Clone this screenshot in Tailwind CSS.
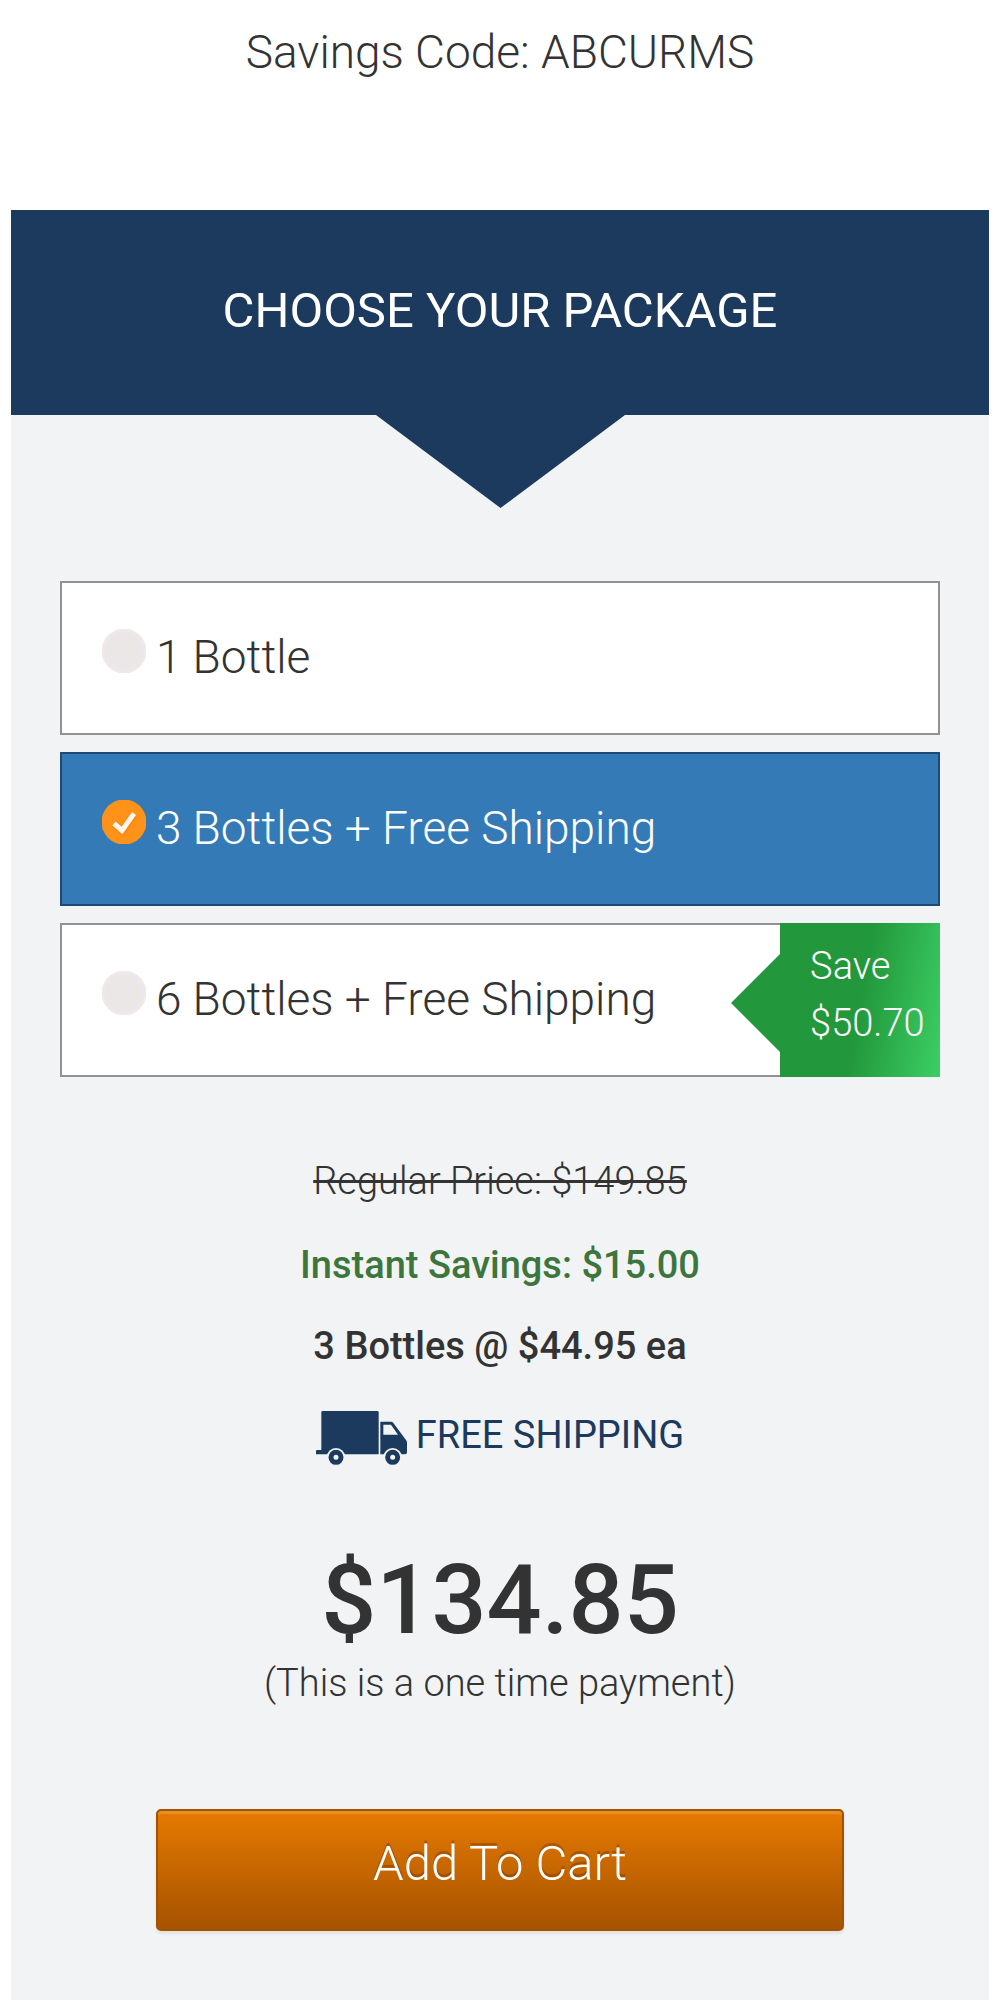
<!DOCTYPE html>
<html lang="en">
<head>
<meta charset="utf-8">
<meta name="viewport" content="width=device-width, initial-scale=1">
<title>Choose Your Package</title>
<script src="https://cdn.jsdelivr.net/npm/@tailwindcss/browser@4"></script>
</head>
<body class="bg-white font-['Roboto',sans-serif] font-light text-[#333]">
<main class="px-[11px]">
  <p class="pt-5 pb-[126px] text-center text-[46px] leading-[64px]">Savings Code: ABCURMS</p>

  <form class="bg-[#f1f3f5] pb-24" onsubmit="return false">
    <h1 class="bg-[#1b3a5d] pt-[69px] pb-[72px] text-center text-[49px] leading-[64px] font-normal text-white">CHOOSE YOUR PACKAGE</h1>
    <svg class="mx-auto h-[93px] w-[249px] text-[#1b3a5d]" viewBox="0 0 249 93" aria-hidden="true"><path d="M0 0H249L124.500 93Z" fill="currentColor"/></svg>

    <fieldset class="mt-[73px] flex flex-col gap-[17px] px-[5%] text-[46px] leading-[64px]">
      <label class="flex min-h-[154px] items-center gap-[10px] border-2 border-[#929292] bg-white pl-10 has-[:checked]:border-[#1f4a75] has-[:checked]:bg-[#337ab7] has-[:checked]:text-white">
        <span class="mb-[14px] grid size-11 shrink-0">
          <input type="radio" name="package" value="1" class="peer col-start-1 row-start-1 size-11 appearance-none rounded-full">
          <svg class="pointer-events-none col-start-1 row-start-1 size-11 peer-checked:hidden" viewBox="0 0 44 44" aria-hidden="true"><circle cx="22" cy="22" r="22.500" fill="#f7e9df"/><circle cx="22" cy="22" r="21" fill="#e9e8ee"/><circle cx="22" cy="22" r="18" fill="#ebe7e7"/></svg>
          <svg class="pointer-events-none col-start-1 row-start-1 hidden size-11 peer-checked:block" viewBox="0 0 44 44" aria-hidden="true"><circle cx="22" cy="22" r="22.500" fill="#ff931a"/><path d="M12.500 24L20.500 31L32 14.500" fill="none" stroke="#ff7a00" stroke-width="8" opacity=".5"/><path d="M12 23.500L20 30.500L32 13.500" fill="none" stroke="#fff6ee" stroke-width="5"/></svg>
        </span>
        <span class="mb-0.5">1 Bottle</span>
      </label>
      <label class="flex min-h-[154px] items-center gap-[10px] border-2 border-[#929292] bg-white pl-10 has-[:checked]:border-[#1f4a75] has-[:checked]:bg-[#337ab7] has-[:checked]:text-white">
        <span class="mb-[14px] grid size-11 shrink-0">
          <input type="radio" name="package" value="3" checked class="peer col-start-1 row-start-1 size-11 appearance-none rounded-full">
          <svg class="pointer-events-none col-start-1 row-start-1 size-11 peer-checked:hidden" viewBox="0 0 44 44" aria-hidden="true"><circle cx="22" cy="22" r="22.500" fill="#f7e9df"/><circle cx="22" cy="22" r="21" fill="#e9e8ee"/><circle cx="22" cy="22" r="18" fill="#ebe7e7"/></svg>
          <svg class="pointer-events-none col-start-1 row-start-1 hidden size-11 peer-checked:block" viewBox="0 0 44 44" aria-hidden="true"><circle cx="22" cy="22" r="22.500" fill="#ff931a"/><path d="M12.500 24L20.500 31L32 14.500" fill="none" stroke="#ff7a00" stroke-width="8" opacity=".5"/><path d="M12 23.500L20 30.500L32 13.500" fill="none" stroke="#fff6ee" stroke-width="5"/></svg>
        </span>
        <span class="mb-0.5">3 Bottles + Free Shipping</span>
      </label>
      <label class="flex min-h-[154px] items-center gap-[10px] border-2 border-[#929292] bg-white pl-10 has-[:checked]:border-[#1f4a75] has-[:checked]:bg-[#337ab7] has-[:checked]:text-white">
        <span class="mb-[14px] grid size-11 shrink-0">
          <input type="radio" name="package" value="6" class="peer col-start-1 row-start-1 size-11 appearance-none rounded-full">
          <svg class="pointer-events-none col-start-1 row-start-1 size-11 peer-checked:hidden" viewBox="0 0 44 44" aria-hidden="true"><circle cx="22" cy="22" r="22.500" fill="#f7e9df"/><circle cx="22" cy="22" r="21" fill="#e9e8ee"/><circle cx="22" cy="22" r="18" fill="#ebe7e7"/></svg>
          <svg class="pointer-events-none col-start-1 row-start-1 hidden size-11 peer-checked:block" viewBox="0 0 44 44" aria-hidden="true"><circle cx="22" cy="22" r="22.500" fill="#ff931a"/><path d="M12.500 24L20.500 31L32 14.500" fill="none" stroke="#ff7a00" stroke-width="8" opacity=".5"/><path d="M12 23.500L20 30.500L32 13.500" fill="none" stroke="#fff6ee" stroke-width="5"/></svg>
        </span>
        <span class="mb-0.5">6 Bottles + Free Shipping</span>
        <span class="relative -my-0.5 -mr-0.5 ml-auto flex w-40 shrink-0 flex-col self-stretch bg-linear-[100deg,#22973b_50%,#3acb62_97%] pt-[15px] pl-[30px] text-[38px] leading-[57px] text-white">
          <svg class="absolute top-[31px] right-full h-[98px] w-[49px]" viewBox="0 0 49 98" aria-hidden="true"><path d="M49 0V98L0 49Z" fill="#22973b"/></svg>
          <span>Save</span>
          <span>$50.70</span>
        </span>
      </label>
    </fieldset>

    <section class="mt-[76px] flex flex-col items-center text-center text-[38px] leading-[56px]">
      <p><s>Regular Price: $149.85</s></p>
      <p class="mt-7 font-medium text-[#3c763d]">Instant Savings: $15.00</p>
      <p class="mt-[25px] font-medium">3 Bottles @ $44.95 ea</p>
      <p class="mt-[33px] flex h-14 items-center gap-[9px] font-normal text-[#1b3a5d]">
        <svg class="mt-[6px] h-[54px] w-[91px]" viewBox="18 33 273 162" aria-hidden="true">
          <path fill="currentColor" d="M38 33H202Q206 33 206 37V163H18V153Q18 150 21 150H34V37Q34 33 38 33Z"/>
          <path fill="currentColor" fill-rule="evenodd" d="M211 65H243Q247 65 250 69L288 120Q291 124 291 128V157Q291 163 285 163H211ZM220 74V104H264L243 74Z"/>
          <g fill="#f1f3f5"><circle cx="78" cy="172" r="28"/><circle cx="248" cy="172" r="28"/></g>
          <g fill="none" stroke="currentColor" stroke-width="15"><circle cx="78" cy="172" r="15"/><circle cx="248" cy="172" r="15"/></g>
        </svg>
        <span>FREE SHIPPING</span>
      </p>
      <p class="mt-[82px] text-[97px] leading-[110px] font-medium">$134.85</p>
      <p>(This is a one time payment)</p>
      <button type="submit" class="mt-[98px] h-[122px] w-[688px] max-w-[90%] rounded-[5px] border-2 border-[#a35200] bg-linear-to-b from-[#e67a00] to-[#a65300] pb-3 text-[49px] leading-[64px] text-white shadow-[inset_0_3px_0_rgb(255_255_255/0.15),0_3px_3px_rgb(0_0_0/0.07)] text-shadow-[0_-3px_0_rgb(0_0_0/0.2)]">Add To Cart</button>
    </section>
  </form>
</main>
</body>
</html>
